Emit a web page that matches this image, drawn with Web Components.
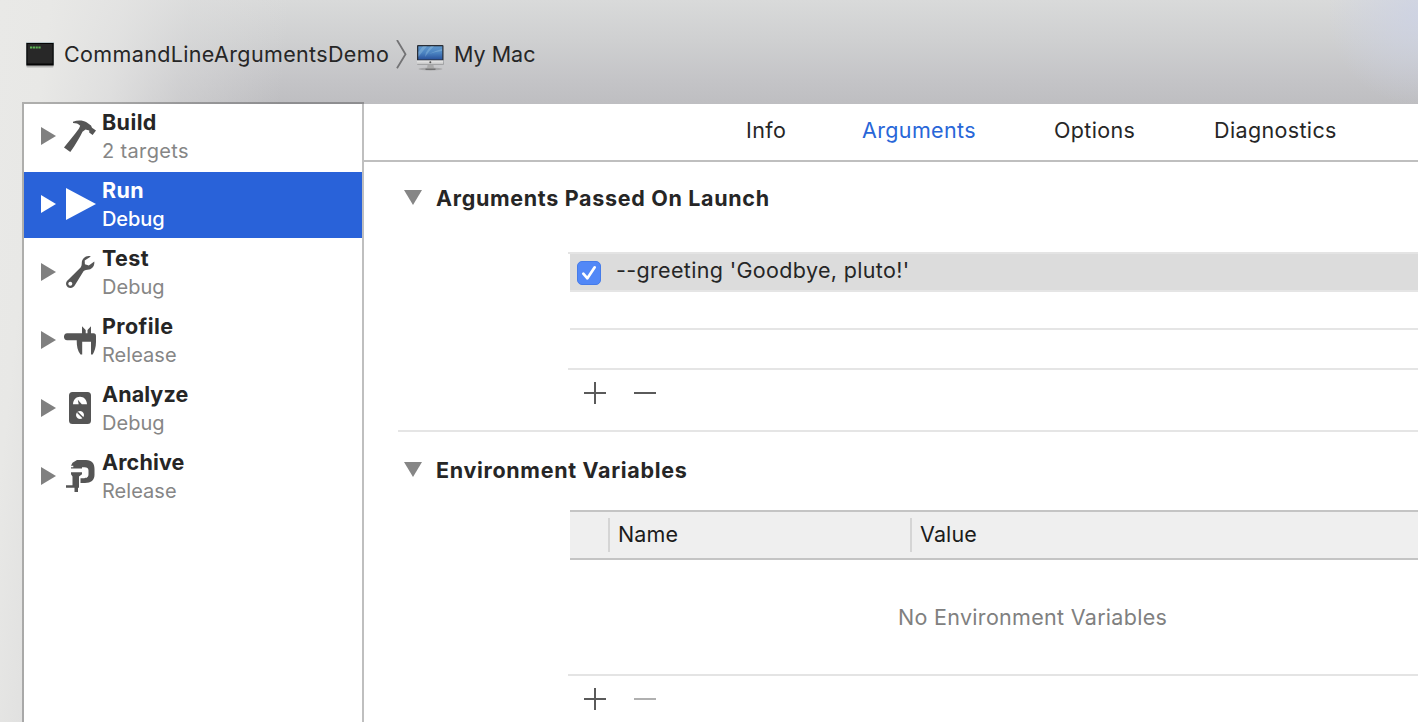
<!DOCTYPE html>
<html lang="en"><head><meta charset="utf-8"><title>Scheme editor</title>
<style>
body{margin:0;width:1418px;height:722px;overflow:hidden;font-family:Inter,"Liberation Sans",sans-serif;font-size:21.5px;color:#262626}
</style></head><body>
<scheme-editor></scheme-editor>
<script>
const define=(name,html,setup)=>customElements.define(name,class extends HTMLElement{
  connectedCallback(){
    if(this.shadowRoot)return;
    const r=this.attachShadow({mode:'open'});
    r.innerHTML=html;
    if(setup)setup(this,r);
  }
});

const icons={
build:`<path d="M9 1.700C14 -.2 19 .2 22.500 2.300L27 5.500L28 7.800L32 10.400L28.600 15L25.200 12.500L25.300 10.500L21.500 9.500L18.500 11.800C16 17 12 24 6.300 32L0 27.500C5 21 10.500 15 15 8.500L16.200 5.800C14.500 3.500 12 2.900 9 2.900Z"/>`,
run:`<path d="M2 0L32 16L2 32Z"/>`,
test:`<path fill-rule="evenodd" d="M24.500 0C21 .2 18 3 17.800 6.500C17.700 8.500 17.700 10 16.600 11.500L3 25C1 27.500 2.200 31.800 6.600 32C8.600 32 10 30.600 11 29L19.500 15.300C20.700 13.800 23 14.200 25 13.600C28.500 12.600 30.800 9.500 30.300 5.400L24.800 9.400L20.900 8.300L20.700 4.500L26.800 .4C26 .1 25.200 0 24.500 0ZM6.300 25.700A2 2 0 1 1 6.290 25.700Z"/>`,
profile:`<path d="M3.200 9.200H18V2.200L21.700 6V9.200H23.500V6L27 2.200V9.200H29.500C31.200 9.200 32 10.200 32 12V18C32 23 30.500 27.500 28.700 30.500H27V17.800H18.200V30.500H16.500C13.500 27 12.700 22 12.700 16.300H3.200C-1.100 16.300-1.100 9.200 3.200 9.200Z"/>`,
analyze:`<path fill-rule="evenodd" d="M8.500 0H23.500Q27 0 27 3.500V28.500Q27 32 23.500 32H8.500Q5 32 5 28.500V3.500Q5 0 8.500 0ZM9 12.300C9.300 7.500 12.200 4.800 16 4.800S22.700 7.500 23 12.300H17.800L13.800 7.700L14.700 12.300ZM16 19A4 4 0 1 0 16.010 19Z"/><path d="M13.500 20.300L19.500 26.300" stroke="currentColor" stroke-width="1.500"/>`,
archive:`<path d="M13 0H22C28 0 30.500 3.500 30.500 9V15C30.500 20 27 23 21 23H16.500V18.200H20C23.500 18.200 24.500 16.500 24.500 14V10.500C24.500 8.500 23 7.300 20.500 7.300H18V8.500H7V7.300H9.300V5.800H7L8.500 2.800Z"/><path d="M7 12.300H18V14.300L15 16.500V27.800H14V32H10.500V27.800H2V25.300H8.500V16.500L7 14.300Z"/>`
};

define('ui-label',`<style>:host{display:block;white-space:pre;line-height:26px}</style><slot></slot>`);

define('disclosure-arrow',`<style>:host{display:block;color:#808080;flex:none}svg{display:block}</style><svg width="18" height="18"><path fill="currentColor"/></svg>`,
 (h,r)=>r.querySelector('path').setAttribute('d',h.hasAttribute('open')?'M0 0H18L9 15Z':'M0 0L15 9L0 18Z'));

define('action-row',`<style>
:host{display:flex;box-sizing:border-box;height:68px;padding-left:17px;color:#262626;--sub:#868686;--tri:#808080;--ico:#555}
:host([selected]){height:66px;margin-bottom:2px;background:#2962d9;color:#fff;--sub:#fff;--tri:#fff;--ico:#fff;--w:500}
disclosure-arrow{margin:23px 8px 0 0;width:15px;color:var(--tri)}
.icon{width:32px;height:34px;margin:16px 6px 0 0;color:var(--ico);fill:currentColor;flex:none;overflow:visible}
.text{display:flex;flex-direction:column;padding-top:5px}
.t{font-weight:650;letter-spacing:var(--ls,.4px)}
.s{font-size:20px;font-weight:var(--w,400);color:var(--sub);margin-top:3px;letter-spacing:var(--lss,.04px)}
:host([selected]) .s{letter-spacing:-.1px}
</style><disclosure-arrow></disclosure-arrow><svg class="icon" viewBox="0 0 32 34"></svg><div class="text"><ui-label class="t"><slot></slot></ui-label><ui-label class="s"><slot name="sub"></slot></ui-label></div>`,
 (h,r)=>r.querySelector('.icon').innerHTML=icons[h.getAttribute('icon')]);

define('path-bar',`<style>
:host{display:flex;align-items:flex-start;box-sizing:border-box;height:102px;padding:36px 0 0 25px;color:#262626}
svg{display:block;flex:none}
.term{margin-top:6px}.chev{margin:4px 10px 0 7px}.mac{margin-top:9px}
ui-label{margin-top:5px}
.a{margin-left:9px;width:325px;letter-spacing:.36px}.b{margin-left:10px}
</style>
<svg class="term" width="30" height="26"><rect x="1.500" y="3" width="27" height="22.500" rx="1" fill="#777" opacity=".45"/><rect x="1" y="0" width="28" height="23" fill="#b7c5c8"/><rect x="1.300" y="1" width="27.400" height="22.500" fill="#050505"/><rect x="2.500" y="2" width="25" height="19.500" fill="#282828"/><path fill="none" stroke="#5cb454" stroke-width="2" stroke-dasharray="2.200 .6" d="M5 5.500H16"/></svg>
<ui-label class="a"><slot name="scheme"></slot></ui-label>
<svg class="chev" width="11" height="29"><path d="M1 0L9.500 14.300L1 28.300" fill="none" stroke="#737375" stroke-width="1.800"/></svg>
<svg class="mac" width="27" height="26"><defs><linearGradient id="s" x1="0" y1="0" x2="0" y2="1"><stop stop-color="#5e96cc"/><stop offset=".5" stop-color="#4b83c1"/><stop offset="1" stop-color="#29529c"/></linearGradient><linearGradient id="c" x1="0" y1="0" x2="0" y2="1"><stop stop-color="#eee"/><stop offset="1" stop-color="#bdbdbd"/></linearGradient></defs><ellipse cx="13.500" cy="24" rx="12" ry="1.500" fill="#777" opacity=".4"/><rect x="0" y="0" width="26.500" height="20" rx="1" fill="#292d35"/><rect x="1.300" y="1.300" width="24" height="13.200" fill="url(#s)"/><path d="M8 12Q8 7 14 1.300H17Q12 6 8 12M12 9Q17 6 25 4V6Q17 7 12 9M1.300 7L6 1.300H10Q6 6 1.300 12" fill="#a4cae6" opacity=".35"/><rect x="0" y="15.300" width="26.500" height="4.500" fill="url(#c)"/><circle cx="13.300" cy="17.300" r="1" fill="#555"/><path d="M10.500 20H16.500L17 23.500H10Z" fill="#aaa"/><path d="M8.500 24.200H18.500" stroke="#666" stroke-width="1.200"/></svg>
<ui-label class="b"><slot name="destination"></slot></ui-label>`);

define('tab-item',`<style>:host{display:block;color:#262626;letter-spacing:.36px}:host([selected]){color:#2866d8}</style><ui-label><slot></slot></ui-label>`);
define('tab-strip',`<style>:host{display:flex;box-sizing:border-box;height:58px;padding:13px 0 0 382px;border-bottom:2px solid #bfbfbf}</style><slot></slot>`);
define('section-title',`<style>:host{display:flex;align-items:flex-start;font-weight:650;letter-spacing:.68px;height:26px}disclosure-arrow{margin:5px 14px 0 0;color:#868686}</style><disclosure-arrow open></disclosure-arrow><ui-label><slot></slot></ui-label>`);
define('add-remove',`<style>:host{display:flex;gap:28px;padding:12px 0 0 16px;color:#5a5a5a}svg{display:block}:host([empty]) .m{color:#b0b0b0}</style><svg width="22" height="22"><path d="M0 10H22V12H0ZM10 0H12V22H10Z" fill="currentColor"/></svg><svg class="m" width="22" height="22"><path d="M0 10H22V12H0Z" fill="currentColor"/></svg>`);
define('arg-list',`<style>
:host{display:block;border-top:2px solid #e4e4e4}
.row{display:flex;box-sizing:border-box;margin-left:2px;height:38px;border-bottom:2px solid #e5e5e5}
.on{background:#dcdcdc;padding-left:7px}.on svg{margin:7px 15px 0 0}ui-label{margin-top:3px;letter-spacing:.34px}
.last{margin-left:0;height:40px}
</style><div class="row on"><svg width="24" height="24"><rect x=".5" y=".5" width="23" height="23" rx="4.500" fill="#5288f7" stroke="#467ce9"/><path d="M6.300 12.700L10.400 17.300L17.700 6.300" fill="none" stroke="#fff" stroke-width="2.700" stroke-linecap="round" stroke-linejoin="round"/></svg><ui-label><slot></slot></ui-label></div><div class="row"></div><div class="row last"></div>`);
define('env-table',`<style>
:host{display:block;height:166px;border-bottom:2px solid #e4e4e4;box-sizing:border-box}
.head{display:flex;box-sizing:border-box;height:50px;margin-left:2px;background:#efefef;border:solid #c4c4c4;border-width:2px 0;padding:6px 0 0 38px;color:#1b1b1b}
.c{height:34px;border-left:2px solid #d5d5d5;padding-left:8px;box-sizing:border-box;width:302px}.c ui-label{margin-top:3px;letter-spacing:.15px}
.empty{margin:44px 0 0 330px;color:#808080;letter-spacing:.3px}
</style><div class="head"><div class="c"><ui-label>Name</ui-label></div><div class="c"><ui-label>Value</ui-label></div></div><ui-label class="empty"><slot></slot></ui-label>`);

define('scheme-editor',`<style>
:host{display:block;width:1418px;height:722px;overflow:hidden;background:
 linear-gradient(96deg,#e9e9e7 0,#e8e8e6 50px,#e5e5e4d0 120px,#dfdfdf70 190px,#d8d8d800 290px),
 radial-gradient(ellipse 90px 90px at 1418px 15px,#ccd2e6c0,#ccd2e600),
 linear-gradient(#d9dada 0,#cfd0d1 40px,#c4c4c7 80px,#bebec1 104px)}
.body{display:flex;height:620px;padding-left:22px}
.side{box-sizing:border-box;width:342px;border:solid #00000040;border-width:2px 2px 0;background:#fff padding-box}
.main{flex:1;min-width:0;margin-top:2px;background:#fff;overflow:hidden;box-shadow:-2px 0 #bfbfbf}
.s{margin-left:34px}.p{padding:23px 0 0 6px}
arg-list{margin-top:41px}
.s arg-list,.s env-table,add-remove{margin-left:170px}
.one{height:268px;border-bottom:2px solid #e5e5e5}.two .p{padding-top:25px}env-table{margin-top:27px}
</style>
<path-bar><span slot="scheme">CommandLineArgumentsDemo</span><span slot="destination">My Mac</span></path-bar>
<div class="body"><div class="side">
<action-row icon="build" style="--lss:.35px">Build<span slot="sub">2 targets</span></action-row>
<action-row icon="run" selected>Run<span slot="sub">Debug</span></action-row>
<action-row icon="test">Test<span slot="sub">Debug</span></action-row>
<action-row icon="profile">Profile<span slot="sub">Release</span></action-row>
<action-row icon="analyze" style="--ls:.1px">Analyze<span slot="sub">Debug</span></action-row>
<action-row icon="archive" style="--ls:.15px">Archive<span slot="sub">Release</span></action-row>
</div><div class="main">
<tab-strip><tab-item style="width:116px">Info</tab-item><tab-item selected style="width:192px">Arguments</tab-item><tab-item style="width:160px">Options</tab-item><tab-item>Diagnostics</tab-item></tab-strip>
<div class="s one"><div class="p"><section-title>Arguments Passed On Launch</section-title></div><arg-list>--greeting 'Goodbye, pluto!'</arg-list><add-remove></add-remove></div>
<div class="s two"><div class="p"><section-title>Environment Variables</section-title></div><env-table>No Environment Variables</env-table><add-remove empty></add-remove></div>
</div></div>`);
</script></body></html>
